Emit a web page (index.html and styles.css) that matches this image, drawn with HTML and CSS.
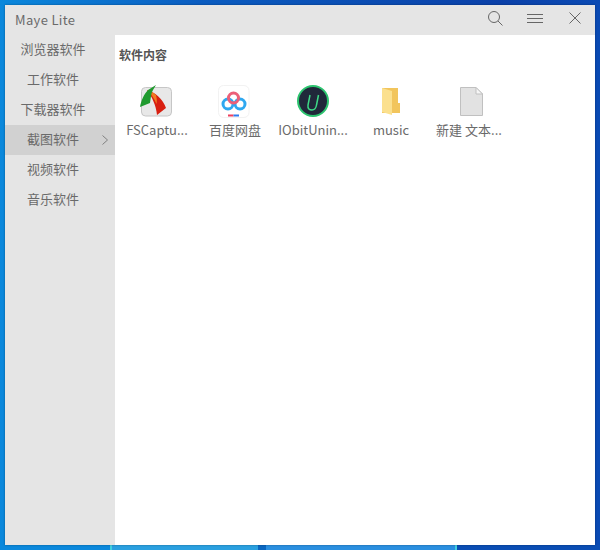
FILE: index.html
```html
<!DOCTYPE html>
<html lang="zh-CN">
<head>
    <meta charset="UTF-8">
    <title>Maye Lite</title>
    <link rel="stylesheet" href="styles.css">
</head>
<body>
    <div class="window">
        <header class="titlebar">
            <span class="title">Maye Lite</span>
            <div class="controls">
                <svg class="btn-search" width="15" height="15" viewBox="0 0 15 15"><circle cx="6" cy="6" r="5.5"/><path d="M10 10l4.500 4.500"/></svg>
                <svg class="btn-menu" width="16" height="9" viewBox="0 0 16 9"><path d="M0 .5h16M0 4.500h16M0 8.500h16"/></svg>
                <svg class="btn-close" width="12" height="12" viewBox="0 0 12 12"><path d="M.5.5l11 11M11.500.5l-11 11"/></svg>
            </div>
        </header>
        <div class="main">
            <nav class="sidebar">
                <div class="nav-item">浏览器软件</div>
                <div class="nav-item">工作软件</div>
                <div class="nav-item">下载器软件</div>
                <div class="nav-item active">截图软件
                    <svg class="arrow" width="6" height="10" viewBox="0 0 6 10"><path d="M.5.5L5.500 5 .5 9.500"/></svg>
                </div>
                <div class="nav-item">视频软件</div>
                <div class="nav-item">音乐软件</div>
            </nav>
            <section class="content">
                <h2 class="heading">软件内容</h2>
                <div class="grid">
                    <div class="app">
                        <svg class="icon" width="32" height="32" viewBox="0 0 32 32">
                            <rect x="0.500" y="2.500" width="30" height="28.500" rx="4" fill="#e8e8e8" stroke="#c6c6c6"/>
                            <path d="M6 5C14 7 22 14 25 23L16 30C15 20 11 12 6 5Z" fill="#d81f10"/>
                            <path d="M6 5C10 6 13 8 15 10C16 14 16 16 15.500 19C13 13 10 9 6 5Z" fill="#f07a20"/>
                            <path d="M15 0L7 5C3 9 0 16-1 22L9 18C10 12 10 8 12 5Z" fill="#1f9a2e"/>
                        </svg>
                        <span class="name">FSCaptu...</span>
                    </div>
                    <div class="app">
                        <svg class="icon" width="32" height="32" viewBox="0 0 32 32">
                            <rect x="-0.500" y="0.500" width="30.500" height="32" rx="5" fill="#fff" stroke="#f2f2f2"/>
                            <circle cx="9" cy="19" r="5" fill="none" stroke="#2fa8f0" stroke-width="3"/>
                            <circle cx="21" cy="19" r="5" fill="none" stroke="#2fa8f0" stroke-width="3"/>
                            <circle cx="14.500" cy="13" r="5" fill="none" stroke="#ec5f78" stroke-width="3"/>
                            <rect x="9" y="29.500" width="5.500" height="2" fill="#ee3f5e"/>
                            <rect x="14.500" y="29.500" width="5.500" height="2" fill="#2d7cf0"/>
                        </svg>
                        <span class="name">百度网盘</span>
                    </div>
                    <div class="app">
                        <svg class="icon" width="32" height="32" viewBox="0 0 32 32">
                            <circle cx="16" cy="16" r="15" fill="#20283a" stroke="#2cc46f" stroke-width="2"/>
                            <path d="M13 10L11 20C10.500 24 12.500 25 15 25C18 25 19 23 19.500 20L21.500 10" fill="none" stroke="#3ddb86" stroke-width="1.500"/>
                        </svg>
                        <span class="name">IObitUnin...</span>
                    </div>
                    <div class="app">
                        <svg class="icon" width="32" height="32" viewBox="0 0 32 32">
                            <path d="M7 3H23V18H25V28H7Z" fill="#f2c55c"/>
                            <path d="M7 3L17 6V30L7 27Z" fill="#fbe08e"/>
                        </svg>
                        <span class="name">music</span>
                    </div>
                    <div class="app">
                        <svg class="icon" width="32" height="32" viewBox="0 0 32 32">
                            <path d="M7.500 2.500H23L29.500 9V30.500H7.500Z" fill="#e2e2e2" stroke="#c0c0c0"/>
                            <path d="M23 2.500V9H29.500Z" fill="#f6f6f6" stroke="#c0c0c0"/>
                        </svg>
                        <span class="name">新建 文本...</span>
                    </div>
                </div>
            </section>
        </div>
    </div>
</body>
</html>
```

FILE: styles.css
```css
html, body {
    margin: 0;
    padding: 0;
    height: 550px;
    overflow: hidden;
}
body {
    box-sizing: border-box;
    padding: 5px;
    font-family: "Noto Sans CJK SC", "Noto Sans", sans-serif;
    font-size: 13px;
    color: #6a6a6a;
    background-color: #0a4ab4;
    background-image:
        linear-gradient(to right,
            #0a88dc 0, #0a88dc 110px,
            #40d0e0 110px, #40d0e0 112px,
            #2aa0e0 112px, #2aa0e0 258px,
            #0a66c0 258px, #0a66c0 266px,
            #2a8fe0 266px, #2a8fe0 455px,
            #40d0e0 455px, #40d0e0 457px,
            #0a4db4 457px, #0a4db4 100%),
        linear-gradient(to right, #0a88dc 0, #0a5cc0 200px, #0a40a8 500px, #0a4ab4 100%);
    background-size: 100% 5px, 100% 100%;
    background-position: 0 100%, 0 0;
    background-repeat: no-repeat;
}
.window {
    display: flex;
    flex-direction: column;
    width: 590px;
    height: 540px;
    background-color: #e5e5e5;
    box-shadow: 0 0 2px rgba(0, 0, 0, 0.35);
}
.titlebar {
    display: flex;
    justify-content: space-between;
    align-items: center;
    height: 30px;
    padding: 0 14px 0 10px;
    flex-shrink: 0;
}
.title {
    font-size: 13px;
    letter-spacing: 0.35px;
    margin-bottom: 2px;
}
.controls {
    display: flex;
    align-items: center;
    gap: 24px;
    margin-bottom: 4px;
}
.controls svg {
    display: block;
    fill: none;
    stroke: #666;
    stroke-width: 1;
}
.controls .btn-close {
    margin-left: 2px;
}
.main {
    display: flex;
    flex: 1;
}
.sidebar {
    width: 110px;
    flex-shrink: 0;
}
.nav-item {
    position: relative;
    box-sizing: border-box;
    height: 30px;
    line-height: 28px;
    padding-right: 14px;
    text-align: center;
}
.nav-item.active {
    background-color: #d1d1d1;
}
.arrow {
    position: absolute;
    right: 7px;
    top: 10px;
    fill: none;
    stroke: #808080;
}
.content {
    flex: 1;
    background-color: #fff;
    padding: 0 3px;
}
.heading {
    margin: 0;
    padding: 4px 1px 0;
    font-size: 12px;
    line-height: 32px;
    font-weight: bold;
    color: #555;
}
.grid {
    display: flex;
    padding-top: 14px;
}
.app {
    display: flex;
    flex-direction: column;
    align-items: center;
    width: 78px;
}
.icon {
    display: block;
    overflow: visible;
}
.name {
    margin-top: 3px;
    line-height: 20px;
    white-space: nowrap;
}
```
